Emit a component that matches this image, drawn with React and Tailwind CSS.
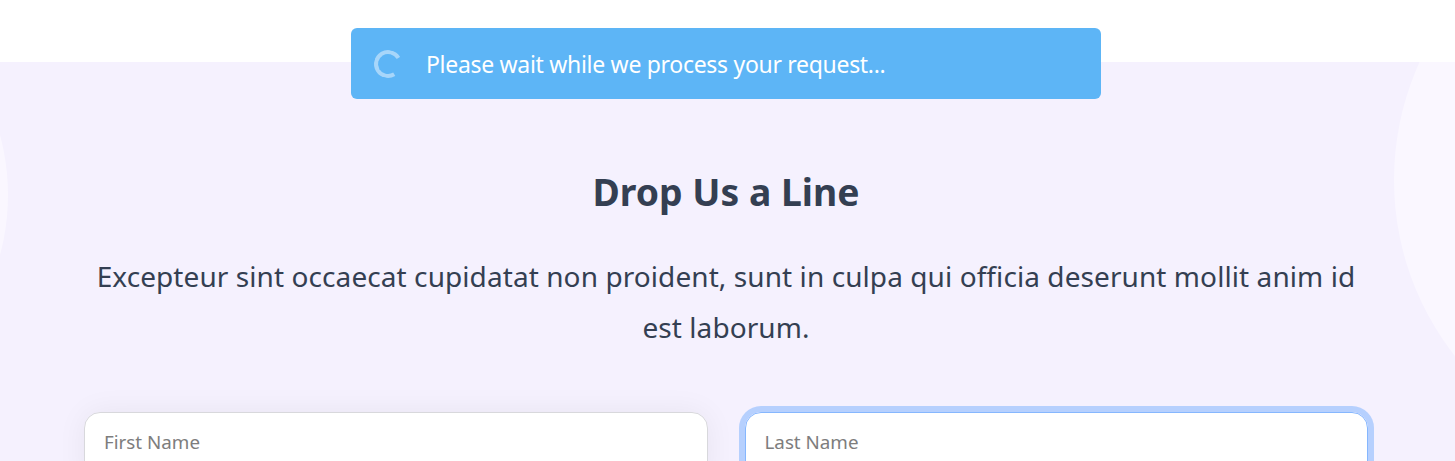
const fieldClass =
  "w-full h-[72px] bg-white px-[19px] pt-[4px] pb-[16px] text-[18.8px] text-[#333] outline-none rounded-[16px] placeholder:text-[#7d7d7d]";

export default function App() {
  return (
    <div className="relative h-[461px] overflow-hidden bg-white font-['Noto_Sans',sans-serif]">
      <div className="h-[62px]" />

      <section className="relative h-[399px] overflow-hidden bg-[#f5f1fe] pl-[84px] pr-[87px] pt-[106px]">
        {/* background circles */}
        <div className="absolute left-[-450px] top-[-96px] h-[458px] w-[458px] rounded-full bg-[#faf7ff]" />
        <div className="absolute left-[1394px] top-[-167px] h-[570px] w-[570px] rounded-full bg-[#faf7ff]" />

        <div className="relative text-center text-[#343f52]">
          <h2 className="text-[37.3px] font-bold leading-[48px]">Drop Us a Line</h2>
          <p className="mt-[35px] text-[28px] leading-[51px] tracking-[0.08px]">
            Excepteur sint occaecat cupidatat non proident, sunt in culpa qui officia deserunt mollit anim id est laborum.
          </p>
        </div>

        <div className="relative mt-[59px] grid grid-cols-2 gap-[37px]">
          <div className="rounded-[16px] shadow-[0_0_30px_rgba(30,34,40,0.06)]">
            <input
              className={`${fieldClass} border border-[#d8d8dc]`}
              placeholder="First Name"
            />
          </div>
          <div className="rounded-[16px] shadow-[0_0_0_6px_#b6d0fe]">
            <input
              className={`${fieldClass} border border-[#86b7fe]`}
              placeholder="Last Name"
            />
          </div>
        </div>
      </section>

      <div className="absolute left-[351px] top-[28px] flex h-[71px] w-[750px] items-center gap-[24px] rounded-[6px] bg-[#5db5f6] pl-[23px] text-[23px] tracking-[-0.3px] text-white">
        <span className="h-[28px] w-[28px] shrink-0 rotate-[14deg] rounded-full border-[4px] border-[#a7d6fa] border-r-transparent" />
        <span className="pt-[2px]">Please wait while we process your request...</span>
      </div>
    </div>
  );
}
